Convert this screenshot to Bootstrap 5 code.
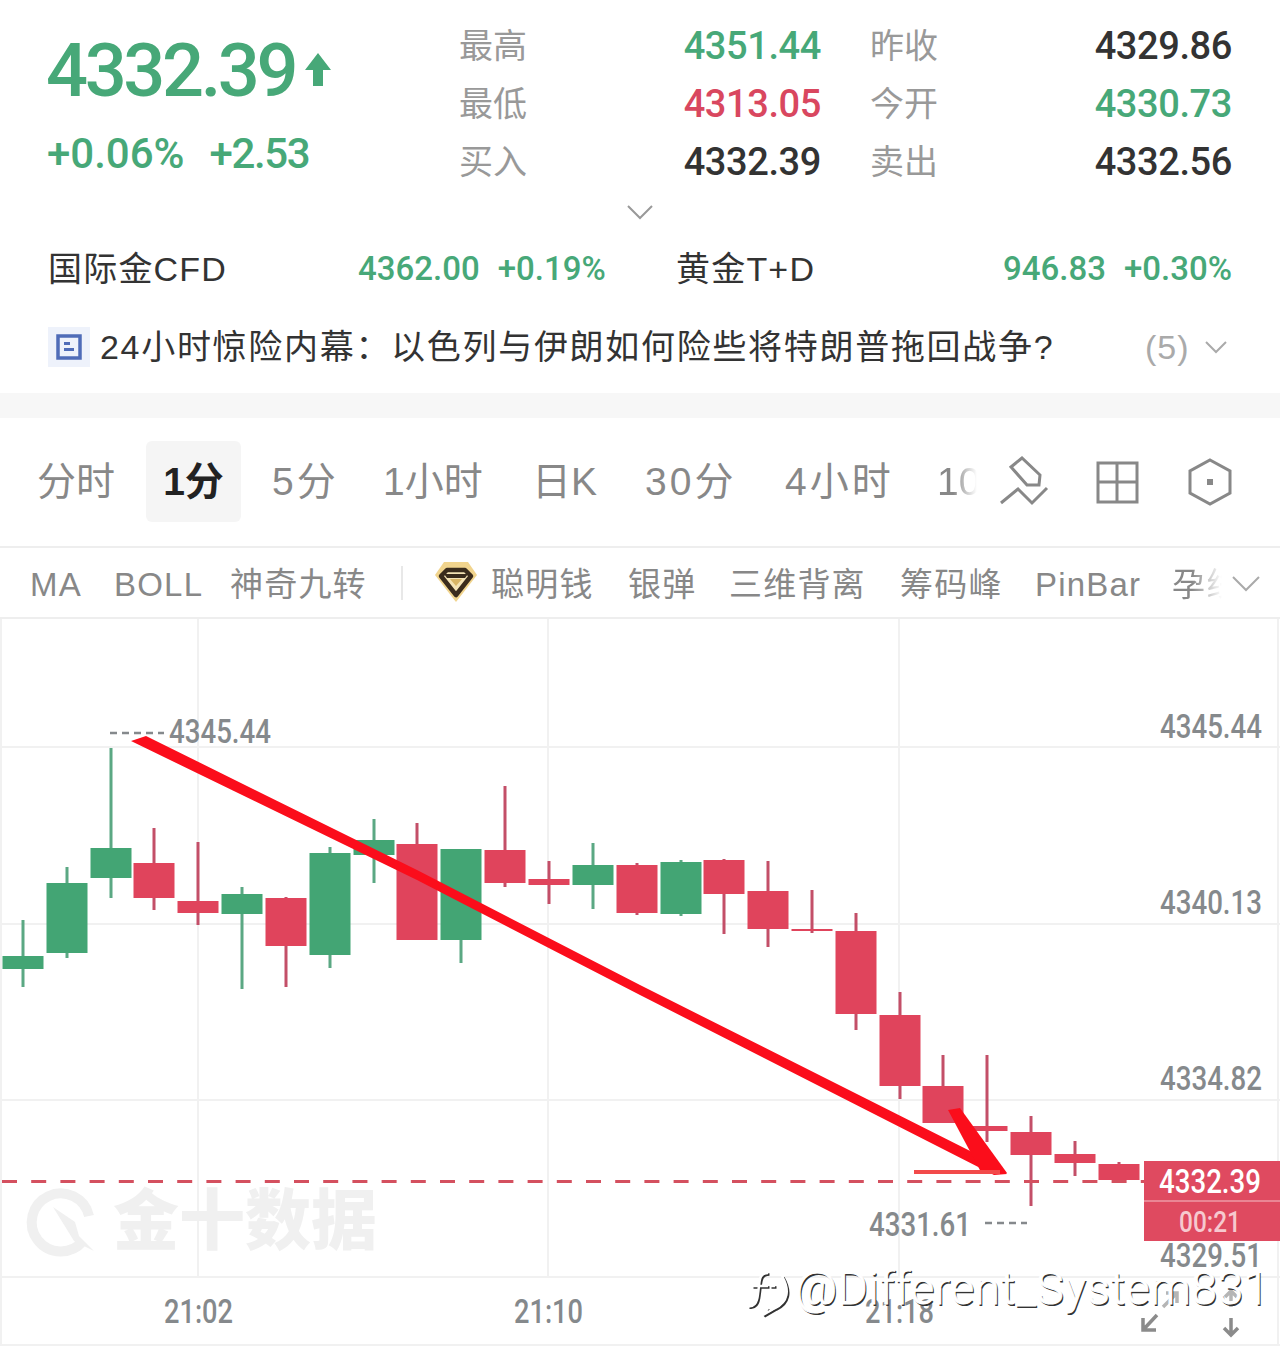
<!DOCTYPE html>
<html lang="zh-CN">
<head>
  <meta charset="UTF-8">
  <title>现货黄金</title>
  <link rel="stylesheet" href="https://cdn.jsdelivr.net/npm/bootstrap@5.3.0/dist/css/bootstrap.min.css">
  <style>
    body {
      font-family: "Liberation Sans", "Noto Sans CJK SC", sans-serif;
      background: #fff;
      color: #333;
      width: 1280px;
      overflow-x: hidden;
    }

    .din {
      font-family: "Roboto", sans-serif;
    }

    .up-text { color: #47a878; }
    .down-text { color: #d9475f; }

    .quote-top {
      padding: 17px 48px 0;
      height: 197px;
    }

    .price-box { width: 411px; }

    .price-main {
      font-size: 74px;
      line-height: 58px;
      letter-spacing: -3.4px;
      font-weight: 500;
      margin-top: 25px;
      margin-left: -2px;
    }

    .price-sub {
      font-size: 42px;
      line-height: 50px;
      font-weight: 500;
      margin-top: 29px;
      margin-left: -1px;
      gap: 25px;
    }

    .price-sub .sub-pct { letter-spacing: 0; }
    .price-sub .sub-abs { letter-spacing: -1.4px; }

    .quote-grid {
      display: grid;
      grid-template-columns: 114px 248px 163px 248px;
      grid-auto-rows: 58px;
      align-items: center;
      flex: 1;
    }

    .quote-grid .lbl {
      font-size: 34px;
      color: #999;
    }

    .quote-grid .val {
      font-size: 38px;
      letter-spacing: -0.4px;
      font-weight: 500;
      text-align: right;
      color: #333;
    }

    .quote-grid .val.up-text { color: #47a878; }
    .quote-grid .val.down-text { color: #d9475f; }
    .quote-grid .lbl2 { padding-left: 49px; }

    .more-row {
      height: 29px;
    }

    .cross-row {
      padding: 14px 48px 0;
      height: 72px;
      font-size: 34px;
      align-items: center;
    }

    .cross-name { width: 310px; color: #333; letter-spacing: 1.2px; }
    .cross-name2 { color: #333; letter-spacing: 1.2px; }
    .cross-num {
      font-size: 33px;
      font-weight: 500;
      gap: 18px;
    }

    .news-row {
      padding: 3px 48px 0;
      height: 95px;
      font-size: 34px;
      color: #333;
    }

    .news-ico {
      width: 42px;
      height: 40px;
      background: #eef2fb;
      margin-right: 10px;
    }

    .news-text { letter-spacing: 1.7px; width: 1045px; white-space: nowrap; }
    .news-count { color: #aaa; letter-spacing: 1px; }

    .band {
      height: 25px;
      background: #f7f7f7;
    }

    .tab-row {
      height: 130px;
      border-bottom: 2px solid #eee;
      color: #888;
      font-size: 39px;
      white-space: nowrap;
      overflow: hidden;
    }

    .tab-list { position: relative; width: 990px; height: 128px; overflow: hidden; }
    .tab-item { position: absolute; top: 0; line-height: 128px; }
    .tab-item.wide { letter-spacing: 3px; }
    .tab-item.on {
      top: 23px;
      left: 146px;
      width: 95px;
      height: 81px;
      line-height: 81px;
      text-align: center;
      background: #f5f5f5;
      border-radius: 6px;
      color: #222;
      font-weight: 700;
    }

    .tab-fade {
      -webkit-mask-image: linear-gradient(to right, #000 40%, transparent 100%);
      mask-image: linear-gradient(to right, #000 40%, transparent 100%);
      overflow: hidden;
    }

    .ind-row {
      height: 71px;
      border-bottom: 2px solid #eee;
      color: #888;
      font-size: 33px;
      white-space: nowrap;
      letter-spacing: 1.2px;
      position: relative;
      overflow: hidden;
    }

    .ind-item { position: absolute; top: 0; line-height: 74px; }
    .ind-sep { position: absolute; left: 401px; top: 18px; width: 2px; height: 34px; background: #e8e8e8; }

    .chart-svg { display: block; }
    .chart-svg text { font-family: "Roboto", sans-serif; font-weight: 500; }
    .chart-svg .wm { font-family: "Noto Sans CJK SC", sans-serif; font-weight: 900; }
    .chart-svg .wb { font-family: "Roboto", sans-serif; font-weight: 300; }
  </style>
</head>
<body>

<!-- quote header -->
<div class="quote-top d-flex">
  <div class="price-box">
    <div class="d-flex align-items-center">
      <span class="din price-main up-text">4332.39</span>
      <svg width="28" height="34" viewBox="0 0 28 34" style="margin-top:22px;margin-left:9px"><path d="M14 0 L27 17 H19 V33 H9 V17 H1 Z" fill="#47a878"/></svg>
    </div>
    <div class="din price-sub up-text d-flex">
      <span class="sub-pct">+0.06%</span>
      <span class="sub-abs">+2.53</span>
    </div>
  </div>
  <div class="quote-grid">
    <div class="lbl">最高</div><div class="val din up-text">4351.44</div>
    <div class="lbl lbl2">昨收</div><div class="val din">4329.86</div>
    <div class="lbl">最低</div><div class="val din down-text">4313.05</div>
    <div class="lbl lbl2">今开</div><div class="val din up-text">4330.73</div>
    <div class="lbl">买入</div><div class="val din">4332.39</div>
    <div class="lbl lbl2">卖出</div><div class="val din">4332.56</div>
  </div>
</div>

<div class="more-row d-flex justify-content-center align-items-center">
  <svg width="28" height="16" viewBox="0 0 28 16"><path d="M2 2 L14 14 L26 2" fill="none" stroke="#999" stroke-width="2"/></svg>
</div>

<div class="cross-row d-flex">
  <span class="cross-name">国际金CFD</span>
  <span class="din cross-num up-text d-flex" style="width:318px"><span>4362.00</span><span>+0.19%</span></span>
  <span class="cross-name2">黄金T+D</span>
  <span class="din cross-num up-text d-flex ms-auto"><span>946.83</span><span>+0.30%</span></span>
</div>

<div class="news-row d-flex align-items-center">
  <span class="news-ico d-flex align-items-center justify-content-center flex-shrink-0">
    <svg width="26" height="26" viewBox="0 0 26 26"><rect x="2" y="2" width="22" height="22" fill="none" stroke="#4f6cb8" stroke-width="3.5"/><rect x="8" y="8" width="6" height="3" fill="#4f6cb8"/><rect x="8" y="14" width="10" height="3" fill="#4f6cb8"/></svg>
  </span>
  <span class="news-text">24小时惊险内幕：以色列与伊朗如何险些将特朗普拖回战争?</span>
  <span class="news-count">(5)</span>
  <svg class="ms-auto me-1" width="24" height="14" viewBox="0 0 24 14"><path d="M2 2 L12 12 L22 2" fill="none" stroke="#aaa" stroke-width="2"/></svg>
</div>

<div class="band"></div>

<!-- period tabs -->
<div class="tab-row d-flex">
  <div class="tab-list">
    <span class="tab-item" style="left:37px">分时</span>
    <span class="tab-item on">1分</span>
    <span class="tab-item wide" style="left:272px">5分</span>
    <span class="tab-item" style="left:383px">1小时</span>
    <span class="tab-item" style="left:532px">日K</span>
    <span class="tab-item wide" style="left:645px">30分</span>
    <span class="tab-item wide" style="left:785px">4小时</span>
    <span class="tab-item tab-fade" style="left:937px;width:40px">10分</span>
  </div>
  <svg width="290" height="128" viewBox="990 418 290 128">
    <g fill="none" stroke="#888" stroke-width="3">
      <path d="M1022 458 L1011 467 L1027 485 H1039 L1040 475 Z"/>
      <path d="M1001 503 L1018 489 L1032 503 L1047 488"/>
      <rect x="1098" y="463" width="39" height="39"/>
      <path d="M1117 463 V502 M1098 482 H1137"/>
      <path d="M1210 460 L1230 471 V493 L1210 504 L1190 493 V471 Z"/>
    </g>
    <rect x="1207" y="479" width="6" height="6" fill="#888"/>
  </svg>
</div>

<!-- indicators -->
<div class="ind-row">
  <span class="ind-item" style="left:30px">MA</span>
  <span class="ind-item" style="left:114px">BOLL</span>
  <span class="ind-item" style="left:230px">神奇九转</span>
  <span class="ind-sep"></span>
  <svg class="ind-item" style="left:434px;top:13px" width="44" height="42" viewBox="0 0 44 42">
    <path d="M10 1 H34 L43 14 L22 41 L1 14 Z" fill="#f1d48d"/>
    <path d="M13 9 H31 L37 15 L22 34 L7 15 Z" fill="#f5e3b4" stroke="#3b2c1c" stroke-width="4.5" stroke-linejoin="round"/>
    <path d="M10 13 H34 L31 17 H13 Z" fill="#3b2c1c"/>
    <path d="M16 18 H28 L22 25 Z" fill="#d9b565"/>
  </svg>
  <span class="ind-item" style="left:491px">聪明钱</span>
  <span class="ind-item" style="left:628px">银弹</span>
  <span class="ind-item" style="left:729px">三维背离</span>
  <span class="ind-item" style="left:900px">筹码峰</span>
  <span class="ind-item" style="left:1035px">PinBar</span>
  <span class="ind-item tab-fade" style="left:1172px;width:50px">孕线</span>
  <svg class="ind-item" style="left:1231px;top:27px" width="30" height="18" viewBox="0 0 30 18"><path d="M2 2 L15 15 L28 2" fill="none" stroke="#aaa" stroke-width="2"/></svg>
</div>

<!-- candle chart, coordinates are page pixels -->
<svg id="chart" class="chart-svg" width="1280" height="738" viewBox="0 619 1280 738">
  <g stroke="#f1f1f1" stroke-width="2">
    <path d="M0 747 H1280 M0 924 H1280 M0 1100 H1280 M0 1277 H1280 M0 1345 H1280"/>
    <path d="M1 619 V1345 M198 619 V1277 M548 619 V1277 M899 619 V1277 M1278 619 V1345"/>
  </g>

  <g fill="#f0f0f0">
    <path d="M83 1241 A29 29 0 1 1 89 1216" fill="none" stroke="#f0f0f0" stroke-width="10"/>
    <path d="M53 1207 L75 1222 L79 1236 L94 1251 L74 1241 L66 1228 Z"/>
    <text class="wm" x="113" y="1244" font-size="66">金十数据</text>
  </g>

  <g id="candles"></g>

  <line x1="2" y1="1181.5" x2="1144" y2="1181.5" stroke="#d4505f" stroke-width="3" stroke-dasharray="15 14.2"/>

  <g fill="#85898c">
    <text x="1160" y="738" font-size="34" textLength="102" lengthAdjust="spacingAndGlyphs">4345.44</text>
    <text x="1160" y="914" font-size="34" textLength="102" lengthAdjust="spacingAndGlyphs">4340.13</text>
    <text x="1160" y="1090" font-size="34" textLength="102" lengthAdjust="spacingAndGlyphs">4334.82</text>
    <text x="1160" y="1267" font-size="34" textLength="102" lengthAdjust="spacingAndGlyphs">4329.51</text>
    <text x="169" y="743" font-size="34" textLength="102" lengthAdjust="spacingAndGlyphs">4345.44</text>
    <text x="869" y="1236" font-size="34" textLength="102" lengthAdjust="spacingAndGlyphs">4331.61</text>
    <text x="164" y="1323" font-size="34" textLength="69" lengthAdjust="spacingAndGlyphs">21:02</text>
    <text x="514" y="1323" font-size="34" textLength="69" lengthAdjust="spacingAndGlyphs">21:10</text>
    <text x="865" y="1323" font-size="34" textLength="69" lengthAdjust="spacingAndGlyphs">21:18</text>
  </g>
  <g stroke="#85898c" stroke-width="2.5" stroke-dasharray="7 5">
    <line x1="110" y1="733" x2="164" y2="733"/>
    <line x1="985" y1="1223" x2="1027" y2="1223"/>
  </g>

  <rect x="1144" y="1161" width="136" height="80" fill="#df4a60"/>
  <line x1="1144" y1="1201" x2="1280" y2="1201" stroke="#ee9aa6" stroke-width="1.5"/>
  <text x="1159" y="1193" font-size="34" fill="#fff" textLength="102" lengthAdjust="spacingAndGlyphs">4332.39</text>
  <text x="1179" y="1232" font-size="30" fill="#f6c9cf" textLength="62" lengthAdjust="spacingAndGlyphs">00:21</text>

  <!-- hand drawn arrow -->
  <g fill="#fb0d1b">
    <path d="M131 741 L146 736 L417 870 L640 985 L1000 1166 L1007 1174 L994 1175 L640 995 L417 880 Z"/>
    <path d="M948 1110 L960 1108 L1007 1173 L981 1172 Z"/>
    <path d="M914 1170 H1000 V1174 H914 Z" fill="#f24a4a"/>
  </g>

  <!-- small scale arrows -->
  <g fill="none" stroke="#8b8b8b" stroke-width="3.5">
    <path d="M1157 1315 L1143 1330 M1143 1318 V1330 H1156"/>
    <path d="M1231 1318 V1335 M1224 1328 L1231 1335 L1238 1328"/>
    <path d="M1163 1307 L1177 1293 M1166 1293 H1177 V1303" stroke="#b5b5b5"/>
    <path d="M1231 1307 V1291 M1225 1297 L1231 1291 L1237 1297" stroke="#b5b5b5"/>
  </g>

  <!-- embossed weibo mark: dark copy offset under a white copy -->
  <g fill="none" stroke-width="2.5">
    <path stroke="#333" transform="translate(1.5 1.5)" d="M768 1273 C758 1273 760 1282 758 1294 C757 1303 754 1307 748 1306 M752 1286 H768 M770 1286 H775 M782 1276 C790 1290 788 1302 775 1308 L763 1315 L768 1308"/>
    <path stroke="#fff" d="M768 1273 C758 1273 760 1282 758 1294 C757 1303 754 1307 748 1306 M752 1286 H768 M770 1286 H775 M782 1276 C790 1290 788 1302 775 1308 L763 1315 L768 1308"/>
  </g>
  <text class="wb" x="796.5" y="1305.5" font-size="46" fill="#333" textLength="474">@Different_System831</text>
  <text class="wb" x="795" y="1304" font-size="46" fill="#fff" stroke="#fff" stroke-width="1" textLength="474">@Different_System831</text>
</svg>

<script src="https://cdn.jsdelivr.net/npm/bootstrap@5.3.0/dist/js/bootstrap.bundle.min.js"></script>
<script>
  // [centre x, wick top, wick bottom, body top, body bottom, up?]
  const candles = [
    [23, 920, 987, 956, 969, 1], [67, 867, 958, 883, 953, 1], [111, 748, 898, 848, 878, 1],
    [154, 828, 910, 863, 898, 0], [198, 842, 925, 901, 913, 0], [242, 887, 989, 894, 914, 1],
    [286, 897, 987, 898, 946, 0], [330, 847, 968, 853, 955, 1], [374, 819, 883, 840, 855, 1],
    [417, 823, 940, 844, 940, 0], [461, 849, 963, 849, 940, 1], [505, 786, 887, 850, 883, 0],
    [549, 861, 904, 879, 885, 0], [593, 843, 909, 865, 885, 1], [637, 863, 915, 865, 913, 0],
    [681, 860, 916, 862, 914, 1], [724, 859, 934, 860, 894, 0], [768, 861, 947, 891, 929, 0],
    [812, 890, 933, 929, 931, 0], [856, 913, 1030, 931, 1014, 0], [900, 992, 1099, 1015, 1086, 0],
    [943, 1055, 1123, 1086, 1123, 0], [987, 1055, 1142, 1126, 1131, 0], [1031, 1116, 1206, 1132, 1155, 0],
    [1075, 1141, 1176, 1154, 1163, 0], [1119, 1162, 1181, 1164, 1180, 0]
  ];

  let svg = '';
  candles.forEach(function (c) {
    const col = c[5] ? '#43a574' : '#e0445c';
    const wick = c[5] ? '#5ba883' : '#c34f68';
    svg += '<rect x="' + (c[0] - 1.5) + '" y="' + c[1] + '" width="3" height="' + (c[2] - c[1]) + '" fill="' + wick + '"/>';
    svg += '<rect x="' + (c[0] - 20.5) + '" y="' + c[3] + '" width="41" height="' + (c[4] - c[3]) + '" fill="' + col + '"/>';
  });
  document.getElementById('candles').innerHTML = svg;
</script>

</body>
</html>
